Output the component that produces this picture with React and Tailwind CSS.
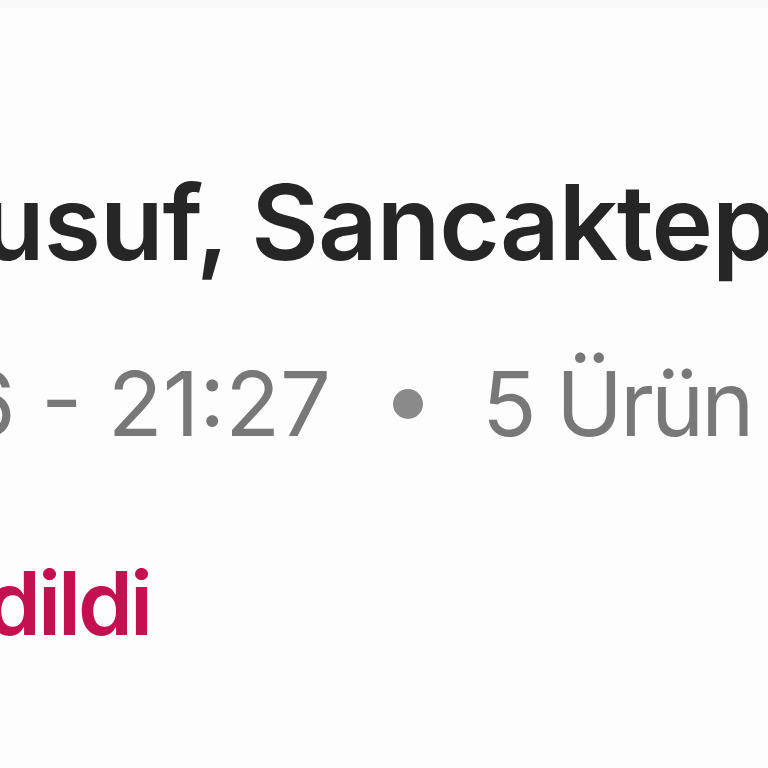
export default function App() {
  return (
    <div className="w-[768px] h-[768px] overflow-hidden bg-[#fdfdfd] font-['Inter',sans-serif]">
      <div className="h-2 bg-[#f9f9f9]" />
      <div className="pt-[162px] whitespace-nowrap">
        <h1 className="ml-[-88px] text-[104px] leading-none font-semibold text-[#262626] tracking-[-1px]">
          Yusuf, Sancaktepe
        </h1>
        <div className="mt-[85px] ml-[-458px] flex items-center text-[90px] leading-none text-[#787878]">
          <span>12.03.2026 - 21:27</span>
          <span className="ml-[62px] mr-[59px] w-[30px] h-[30px] rounded-full bg-[#8a8a8a]" />
          <span className="tracking-[-3px]">5 Ürün</span>
        </div>
        <div className="mt-[110px] ml-[-341px] text-[88px] leading-none font-semibold tracking-[-3px] text-[#c4104f]">
          Teslim edildi
        </div>
      </div>
    </div>
  )
}
